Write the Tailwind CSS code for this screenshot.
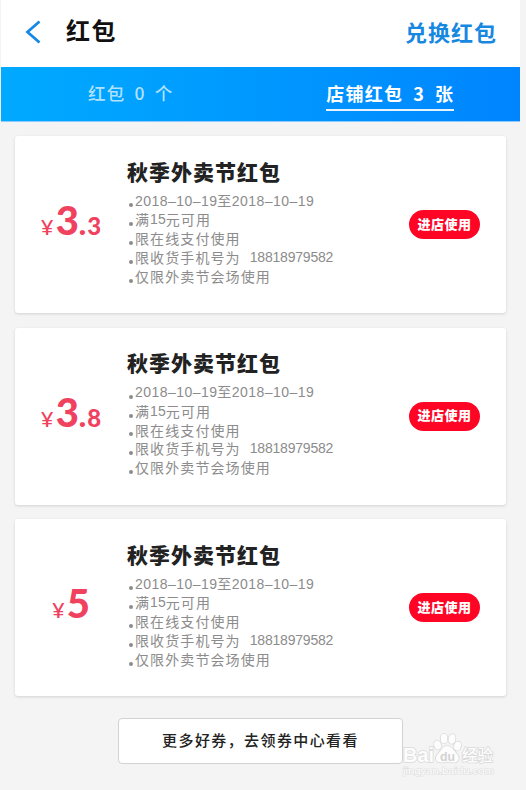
<!DOCTYPE html>
<html lang="zh-CN">
<head>
    <meta charset="UTF-8">
    <meta name="viewport" content="width=device-width, initial-scale=1.0">
    <title>红包</title>
    <script src="https://cdn.jsdelivr.net/npm/@tailwindcss/browser@4"></script>
</head>
<body class="bg-[#f4f4f4] h-[790px] overflow-hidden font-['Noto_Sans_CJK_SC',sans-serif]">
    <header class="ml-px w-[519px] h-[67px] bg-white flex items-center pl-6 pr-[23px] pb-[5px]">
        <svg class="w-4 h-6 shrink-0 mt-[2px]" viewBox="0 0 16 24" fill="none" stroke="#1788e5" stroke-width="2.8"><path d="M14.500 1.500 L2.500 12 L14.500 22.500"/></svg>
        <h1 class="ml-[25px] mb-[3px] text-[24px] leading-none font-bold tracking-[1.5px] text-[#111]">红包</h1>
        <a class="ml-auto mb-px text-[22px] leading-none font-bold tracking-[1px] text-[#1788e0]">兑换红包</a>
    </header>
    <nav class="ml-px w-[519px] h-[55px] bg-linear-to-r from-[#00aaff] to-[#0085ff] border-b border-[#8ccbff] grid grid-cols-2">
        <div class="flex justify-center pt-3">
            <span class="h-8 leading-[28px] text-[17.5px] font-medium tracking-[1.2px] text-[#b0e1ff] flex gap-[9px]"><span>红包</span><span>0</span><span>个</span></span>
        </div>
        <div class="flex justify-center pt-3">
            <span class="h-8 leading-[28px] text-[18px] font-bold tracking-[1.2px] text-white border-b-2 border-white/90 flex gap-[10px]"><span>店铺红包</span><span>3</span><span>张</span></span>
        </div>
    </nav>

    <main class="flex flex-col gap-[14.5px] mt-[14px] ml-[15px] w-[491px]">
        <section class="h-[177px] bg-white rounded-[3px] shadow-[0_1px_3px_rgba(0,0,0,0.14)] flex items-center pr-[26px]">
            <div class="w-[112px] mb-[9px] shrink-0 flex justify-center items-baseline text-[#f0425f] leading-none font-black font-['Lato','Noto_Sans_CJK_SC',sans-serif]">
                <span class="text-[22px] font-medium mr-[2px]">¥</span><span class="text-[40px]">3</span><span class="text-[31px]">.</span><span class="text-[24px] ml-px">3</span>
            </div>
            <div class="h-full pt-[22.5px]">
                <h2 class="text-[21px] leading-[25px] font-black tracking-[1px] text-[#222]">秋季外卖节红包</h2>
                <ul class="mt-[8px] text-[14px] leading-[18.8px] tracking-[1.1px] text-[#8c8c8c] whitespace-nowrap">
                    <li class="flex items-center"><i class="size-1 rounded-full bg-[#8c8c8c] ml-[2px] mr-[2px] mt-[9px]"></i><span class="tracking-[0.45px] font-['Liberation_Sans','Noto_Sans_CJK_SC',sans-serif]">2018–10–19至2018–10–19</span></li>
                    <li class="flex items-center"><i class="size-1 rounded-full bg-[#8c8c8c] ml-[2px] mr-[2px] mt-[9px]"></i>满<span class="tracking-normal font-['Liberation_Sans',sans-serif]">15</span>元可用</li>
                    <li class="flex items-center"><i class="size-1 rounded-full bg-[#8c8c8c] ml-[2px] mr-[2px] mt-[9px]"></i>限在线支付使用</li>
                    <li class="flex items-center"><i class="size-1 rounded-full bg-[#8c8c8c] ml-[2px] mr-[2px] mt-[9px]"></i>限收货手机号为<span class="ml-[9px] tracking-[-0.2px] font-['Liberation_Sans',sans-serif]">18818979582</span></li>
                    <li class="flex items-center"><i class="size-1 rounded-full bg-[#8c8c8c] ml-[2px] mr-[2px] mt-[9px]"></i>仅限外卖节会场使用</li>
                </ul>
            </div>
            <button class="ml-auto w-[71px] h-[29px] pb-[3px] rounded-full bg-[#ff0525] text-white text-[13px] leading-none font-black tracking-[0.5px]">进店使用</button>
        </section>

        <section class="h-[177px] bg-white rounded-[3px] shadow-[0_1px_3px_rgba(0,0,0,0.14)] flex items-center pr-[26px]">
            <div class="w-[112px] mb-[9px] shrink-0 flex justify-center items-baseline text-[#f0425f] leading-none font-black font-['Lato','Noto_Sans_CJK_SC',sans-serif]">
                <span class="text-[22px] font-medium mr-[2px]">¥</span><span class="text-[40px]">3</span><span class="text-[31px]">.</span><span class="text-[24px] ml-px">8</span>
            </div>
            <div class="h-full pt-[22.5px]">
                <h2 class="text-[21px] leading-[25px] font-black tracking-[1px] text-[#222]">秋季外卖节红包</h2>
                <ul class="mt-[8px] text-[14px] leading-[18.8px] tracking-[1.1px] text-[#8c8c8c] whitespace-nowrap">
                    <li class="flex items-center"><i class="size-1 rounded-full bg-[#8c8c8c] ml-[2px] mr-[2px] mt-[9px]"></i><span class="tracking-[0.45px] font-['Liberation_Sans','Noto_Sans_CJK_SC',sans-serif]">2018–10–19至2018–10–19</span></li>
                    <li class="flex items-center"><i class="size-1 rounded-full bg-[#8c8c8c] ml-[2px] mr-[2px] mt-[9px]"></i>满<span class="tracking-normal font-['Liberation_Sans',sans-serif]">15</span>元可用</li>
                    <li class="flex items-center"><i class="size-1 rounded-full bg-[#8c8c8c] ml-[2px] mr-[2px] mt-[9px]"></i>限在线支付使用</li>
                    <li class="flex items-center"><i class="size-1 rounded-full bg-[#8c8c8c] ml-[2px] mr-[2px] mt-[9px]"></i>限收货手机号为<span class="ml-[9px] tracking-[-0.2px] font-['Liberation_Sans',sans-serif]">18818979582</span></li>
                    <li class="flex items-center"><i class="size-1 rounded-full bg-[#8c8c8c] ml-[2px] mr-[2px] mt-[9px]"></i>仅限外卖节会场使用</li>
                </ul>
            </div>
            <button class="ml-auto w-[71px] h-[29px] pb-[3px] rounded-full bg-[#ff0525] text-white text-[13px] leading-none font-black tracking-[0.5px]">进店使用</button>
        </section>

        <section class="h-[177px] bg-white rounded-[3px] shadow-[0_1px_3px_rgba(0,0,0,0.14)] flex items-center pr-[26px]">
            <div class="w-[112px] mb-[9px] shrink-0 flex justify-center items-baseline text-[#f0425f] leading-none font-black font-['Lato','Noto_Sans_CJK_SC',sans-serif]">
                <span class="text-[22px] font-medium mr-[2px]">¥</span><span class="text-[40px]">5</span>
            </div>
            <div class="h-full pt-[22.5px]">
                <h2 class="text-[21px] leading-[25px] font-black tracking-[1px] text-[#222]">秋季外卖节红包</h2>
                <ul class="mt-[8px] text-[14px] leading-[18.8px] tracking-[1.1px] text-[#8c8c8c] whitespace-nowrap">
                    <li class="flex items-center"><i class="size-1 rounded-full bg-[#8c8c8c] ml-[2px] mr-[2px] mt-[9px]"></i><span class="tracking-[0.45px] font-['Liberation_Sans','Noto_Sans_CJK_SC',sans-serif]">2018–10–19至2018–10–19</span></li>
                    <li class="flex items-center"><i class="size-1 rounded-full bg-[#8c8c8c] ml-[2px] mr-[2px] mt-[9px]"></i>满<span class="tracking-normal font-['Liberation_Sans',sans-serif]">15</span>元可用</li>
                    <li class="flex items-center"><i class="size-1 rounded-full bg-[#8c8c8c] ml-[2px] mr-[2px] mt-[9px]"></i>限在线支付使用</li>
                    <li class="flex items-center"><i class="size-1 rounded-full bg-[#8c8c8c] ml-[2px] mr-[2px] mt-[9px]"></i>限收货手机号为<span class="ml-[9px] tracking-[-0.2px] font-['Liberation_Sans',sans-serif]">18818979582</span></li>
                    <li class="flex items-center"><i class="size-1 rounded-full bg-[#8c8c8c] ml-[2px] mr-[2px] mt-[9px]"></i>仅限外卖节会场使用</li>
                </ul>
            </div>
            <button class="ml-auto w-[71px] h-[29px] pb-[3px] rounded-full bg-[#ff0525] text-white text-[13px] leading-none font-black tracking-[0.5px]">进店使用</button>
        </section>
    </main>

    <button class="block mt-[22px] ml-[118px] w-[285px] h-[46px] pb-[2px] bg-white border border-[#d2d2d2] rounded-[4px] text-[15px] font-medium tracking-[1.4px] text-[#222]">更多好券，去领券中心看看</button>

    <!-- watermark -->
    <svg class="absolute left-[400px] top-[730px] w-[100px] h-[50px]" viewBox="0 0 100 50" fill="#fdfdfd" stroke="#d9d9d9" stroke-width="1.6" paint-order="stroke">
        <text x="3" y="32" textLength="31" lengthAdjust="spacingAndGlyphs" class="text-[21px] font-bold font-['Liberation_Sans',sans-serif]">Bai</text>
        <ellipse cx="37.500" cy="15" rx="3.300" ry="4.500" transform="rotate(-15 37.500 15)"/>
        <ellipse cx="44" cy="8.500" rx="3.300" ry="4.800"/>
        <ellipse cx="52" cy="9" rx="3.300" ry="4.800" transform="rotate(12 52 9)"/>
        <ellipse cx="57.500" cy="16" rx="3.300" ry="4.500" transform="rotate(20 57.500 16)"/>
        <path d="M47 16 C42 16 41 21 38 24 C34 28 36 33 42 32.500 C46 31.500 49 31.500 53 32.500 C59 33 60 28 57 24 C53 20 52 16 47 16Z"/>
        <text x="40" y="30.500" textLength="15" lengthAdjust="spacingAndGlyphs" fill="#d2d2d2" stroke="none" class="text-[13px] font-bold font-['Liberation_Sans',sans-serif]">du</text>
        <text x="62" y="31" textLength="31" lengthAdjust="spacingAndGlyphs" class="text-[16px] font-medium">经验</text>
        <text x="3" y="44" textLength="91" lengthAdjust="spacingAndGlyphs" stroke="#e0e0e0" stroke-width="1.2" class="text-[9.5px] font-['Liberation_Sans',sans-serif]">jingyan.baidu.com</text>
    </svg>
</body>
</html>
